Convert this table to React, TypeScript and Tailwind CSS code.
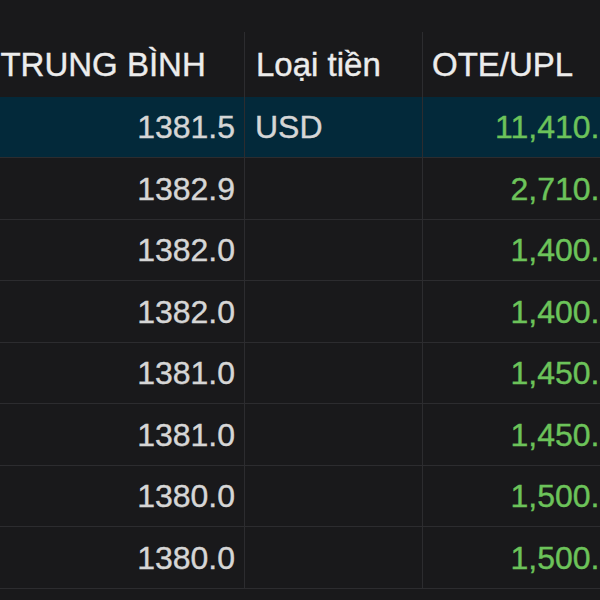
import React from "react";

const rows = [
  { avg: "1381.5", cur: "USD", ote: "11,410.00", h: "h-[61px]", sel: true },
  { avg: "1382.9", cur: "", ote: "2,710.00", h: "h-[62px]" },
  { avg: "1382.0", cur: "", ote: "1,400.00", h: "h-[61px]" },
  { avg: "1382.0", cur: "", ote: "1,400.00", h: "h-[62px]" },
  { avg: "1381.0", cur: "", ote: "1,450.00", h: "h-[61px]" },
  { avg: "1381.0", cur: "", ote: "1,450.00", h: "h-[62px]" },
  { avg: "1380.0", cur: "", ote: "1,500.00", h: "h-[61px]" },
  { avg: "1380.0", cur: "", ote: "1,500.00", h: "h-[62px]" },
];

export default function App() {
  return (
    <div
      className="w-[600px] h-[600px] overflow-hidden bg-[#19191b] [-webkit-text-stroke:0.4px_currentColor]"
      style={{ fontFamily: '"Liberation Sans", Arial, sans-serif' }}
    >
      <div className="h-[32px]" />
      <div className="ml-[-71px] w-[715px] text-[32px] leading-none">
        <div className="flex h-[65px] items-center text-[33px] text-[#ececec]">
          <div className="w-[316px] h-full flex items-center pl-[6px] border-r border-[#2c2c2f] whitespace-nowrap">
            GIÁ TRUNG BÌNH
          </div>
          <div className="w-[178px] h-full flex items-center pl-[11px] border-r border-[#2c2c2f] whitespace-nowrap">
            Loại tiền
          </div>
          <div className="flex-1 h-full flex items-center pl-[9px] whitespace-nowrap">
            OTE/UPL
          </div>
        </div>
        {rows.map((r, i) => (
          <div
            key={i}
            className={`flex ${r.h} items-center border-b border-[#2c2c2f] ${
              r.sel ? "bg-[#03293a]" : ""
            }`}
          >
            <div className="w-[316px] h-full flex items-center justify-end pr-[9px] border-r border-[#2c2c2f] text-[#d6d6d6]">
              {r.avg}
            </div>
            <div className="w-[178px] h-full flex items-center pl-[10px] border-r border-[#2c2c2f] text-[#d6d6d6]">
              {r.cur}
            </div>
            <div className="flex-1 h-full flex items-center justify-end pr-[9px] text-[#6cc35a]">
              {r.ote}
            </div>
          </div>
        ))}
      </div>
    </div>
  );
}
